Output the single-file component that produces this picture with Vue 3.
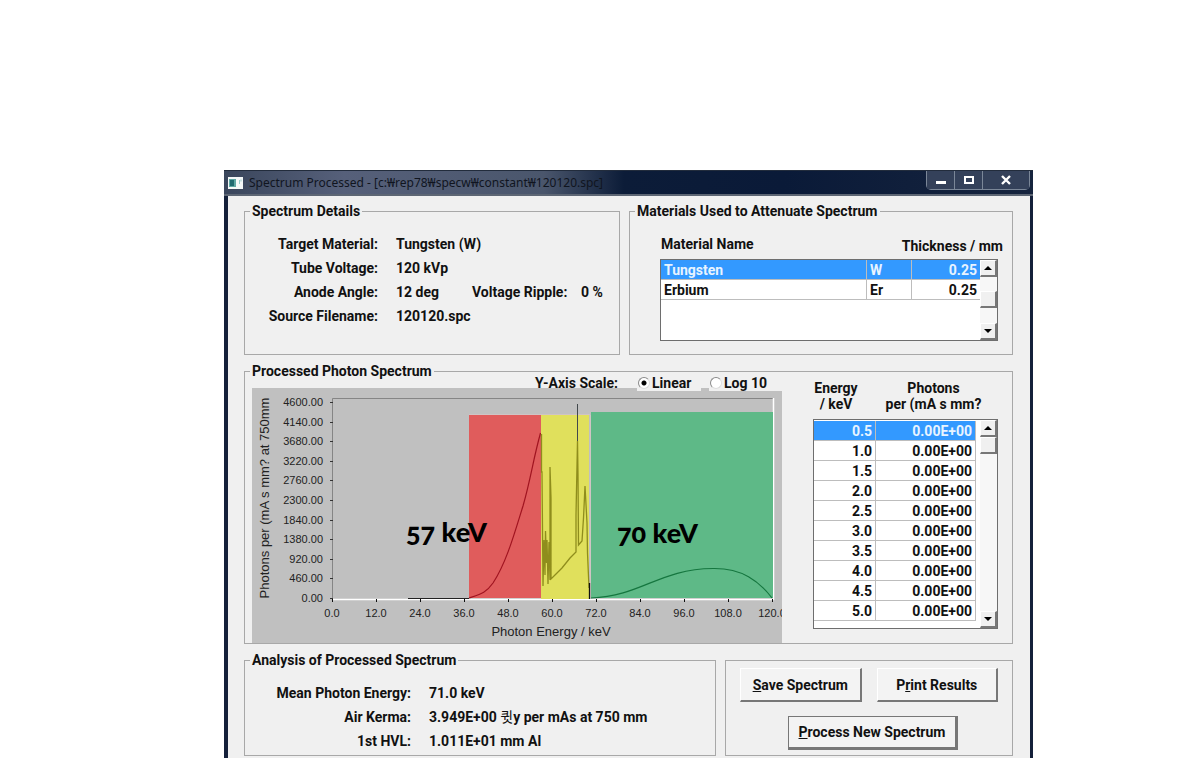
<script setup>
import { ref } from 'vue'

const details = [
  ['Target Material:', 'Tungsten (W)'],
  ['Tube Voltage:', '120 kVp'],
  ['Anode Angle:', '12 deg'],
  ['Source Filename:', '120120.spc'],
]
const materials = [
  ['Tungsten', 'W', '0.25'],
  ['Erbium', 'Er', '0.25'],
]
const energies = ['0.5', '1.0', '1.5', '2.0', '2.5', '3.0', '3.5', '4.0', '4.5', '5.0']
const yTicks = Array.from({ length: 11 }, (_, i) => ({
  label: (4600 - i * 460).toFixed(2),
  y: Math.round(14 + i * 19.6),
}))
const xTicks = Array.from({ length: 11 }, (_, i) => ({
  label: (i * 12).toFixed(1),
  x: 80 + i * 44,
}))
const scale = ref('linear')
</script>

<template>
  <main class="page">
    <section class="window">
      <header class="titlebar">
        <svg class="app-icon" width="15" height="12" viewBox="0 0 15 12" aria-hidden="true">
          <rect width="15" height="12" fill="#f4f8f8" />
          <rect x="1" y="2" width="7" height="8" fill="#5fa8a4" />
          <rect x="2" y="3" width="4" height="6" fill="#1f6a70" />
          <path d="M11.500 3v4M13 2.500v2" stroke="#9cc" fill="none" />
        </svg>
        <h1 class="title">Spectrum Processed - [c:₩rep78₩specw₩constant₩120120.spc]</h1>
        <div class="controls">
          <button type="button" class="ctl" aria-label="Minimize">
            <svg width="12" height="12" viewBox="0 0 12 12"><rect x="1" y="7" width="10" height="3" fill="#fff" /></svg>
          </button>
          <button type="button" class="ctl" aria-label="Maximize">
            <svg width="12" height="12" viewBox="0 0 12 12"><rect x="2" y="3" width="8" height="6" fill="none" stroke="#fff" stroke-width="2" /></svg>
          </button>
          <button type="button" class="ctl close" aria-label="Close">
            <svg width="12" height="12" viewBox="0 0 12 12"><path d="M2 2L10 10M10 2L2 10" stroke="#fff" stroke-width="2.400" /></svg>
          </button>
        </div>
      </header>

      <div class="body">
        <div class="row top">
          <fieldset class="group">
            <legend>Spectrum Details</legend>
            <dl class="facts">
              <template v-for="(d, i) in details" :key="d[0]">
                <dt>{{ d[0] }}</dt>
                <dd>
                  <span class="value">{{ d[1] }}</span>
                  <template v-if="i === 2"><span class="ripple">Voltage Ripple:</span><span>0 %</span></template>
                </dd>
              </template>
            </dl>
          </fieldset>

          <fieldset class="group">
            <legend>Materials Used to Attenuate Spectrum</legend>
            <div class="mat-head"><span>Material Name</span><span class="thick">Thickness / mm</span></div>
            <div class="list mat-list">
              <div class="cells">
                <table aria-label="Materials">
                  <tbody>
                    <tr v-for="(m, i) in materials" :key="m[0]" :class="{ on: i === 0 }">
                      <td>{{ m[0] }}</td><td class="sym">{{ m[1] }}</td><td class="num thk">{{ m[2] }}</td>
                    </tr>
                  </tbody>
                </table>
              </div>
              <div class="scroll">
                <button type="button" aria-label="Scroll up"><svg width="8" height="4" viewBox="0 0 8 4"><path d="M4 0L8 4H0z" /></svg></button>
                <i class="thumb mid"></i>
                <button type="button" class="down" aria-label="Scroll down"><svg width="8" height="4" viewBox="0 0 8 4"><path d="M0 0H8L4 4z" /></svg></button>
              </div>
            </div>
          </fieldset>
        </div>

        <fieldset class="group spectrum">
          <legend>Processed Photon Spectrum</legend>
          <div class="spec-row">
            <div class="chart-col">
              <div class="scale" role="radiogroup" aria-label="Y-Axis Scale">
                <span class="scale-name">Y-Axis Scale:</span>
                <label class="opt"><input v-model="scale" type="radio" name="scale" value="linear" />Linear</label>
                <label class="opt last"><input v-model="scale" type="radio" name="scale" value="log" />Log 10</label>
              </div>
              <svg class="chart" viewBox="0 0 530 255" role="img" aria-label="Photon spectrum">
                <rect width="530" height="255" fill="#c0c0c0" />
                <path d="M80.500 211V10.500H521" fill="none" stroke="#858585" />
                <path d="M80 211.500H521.500V10" fill="none" stroke="#fff" stroke-width="1.500" />
                <g class="tick">
                  <g v-for="t in yTicks" :key="t.label">
                    <path :d="`M78 ${t.y + 0.5}h3`" stroke="#333" />
                    <text :x="71" :y="t.y + 4" text-anchor="end">{{ t.label }}</text>
                  </g>
                  <g v-for="t in xTicks" :key="t.label">
                    <path :d="`M${t.x + 0.5} 211v3`" stroke="#111" />
                    <text :x="t.x" y="229" text-anchor="middle">{{ t.label }}</text>
                  </g>
                </g>
                <text class="axis" x="299" y="248" text-anchor="middle">Photon Energy / keV</text>
                <text class="axis" transform="translate(17 110) rotate(-90)" text-anchor="middle">Photons per (mA s mm? at 750mm</text>
                <path d="M217 26.500H338M338.500 27V210" stroke="#d0c4c4" fill="none" />
                <rect x="217" y="27" width="72" height="183" fill="#e05c5c" />
                <rect x="289" y="27" width="48" height="184" fill="#e0e05c" />
                <rect x="339" y="24" width="182" height="186" fill="#5eb987" />
                <path d="M156 210.500H217" stroke="#222" />
                <path d="M217 210C229 206 234 205 241 195C255 174 264 140 271 118C279 90 281 72 288.500 45" fill="none" stroke="#a01420" stroke-width="1.200" />
                <path d="M289.500 46V84L290 84L291 198L292 152L293 187L293.500 143L294.500 175L295 152L296 196L297 154L298 192V79L299 110V191L304 186L310 180L318 170L324 164V127L325.500 53L326 87L326.500 157L330 153L331.500 130L333 98L335 135L335.500 165L337 200" fill="none" stroke="#8f8d1c" stroke-width="1.300" />
                <path d="M325.500 16V53" stroke="#42484c" />
                <path d="M337.500 195V211" stroke="#111" stroke-width="1.300" />
                <path d="M339 210C390 208 407 181 461 180.500C490 180 507 193 520 210" fill="none" stroke="#15763f" stroke-width="1.200" />
                <text class="mark" x="154" y="154">57 keV</text>
                <text class="mark" x="365" y="155">70 keV</text>
              </svg>
            </div>

            <div class="energy-col">
              <div class="en-head"><span>Energy<br />/ keV</span><span>Photons<br />per (mA s mm?</span></div>
              <div class="list en-list">
                <div class="cells">
                  <table aria-label="Photons by energy">
                    <tbody>
                      <tr v-for="(e, i) in energies" :key="e" :class="{ on: i === 0 }">
                        <td class="num en">{{ e }}</td><td class="num">0.00E+00</td>
                      </tr>
                    </tbody>
                  </table>
                </div>
                <div class="scroll">
                  <button type="button" aria-label="Scroll up"><svg width="8" height="4" viewBox="0 0 8 4"><path d="M4 0L8 4H0z" /></svg></button>
                  <i class="thumb"></i>
                  <button type="button" class="down" aria-label="Scroll down"><svg width="8" height="4" viewBox="0 0 8 4"><path d="M0 0H8L4 4z" /></svg></button>
                </div>
              </div>
            </div>
          </div>
        </fieldset>

        <div class="row bottom">
          <fieldset class="group analysis">
            <legend>Analysis of Processed Spectrum</legend>
            <dl class="facts wide">
              <dt>Mean Photon Energy:</dt>
              <dd>71.0 keV</dd>
              <dt>Air Kerma:</dt>
              <dd>3.949E+00 <span class="hangul">큇</span>y per mAs at 750 mm</dd>
              <dt>1st HVL:</dt>
              <dd>1.011E+01 mm Al</dd>
            </dl>
          </fieldset>
          <div class="actions">
            <div class="pair">
              <button type="button" class="btn"><u>S</u>ave Spectrum</button>
              <button type="button" class="btn">P<u>r</u>int Results</button>
            </div>
            <button type="button" class="btn main"><u>P</u>rocess New Spectrum</button>
          </div>
        </div>
      </div>
    </section>
  </main>
</template>

<style>
body {
  background: #fff;
}
</style>

<style scoped>
.page {
  box-sizing: border-box;
  min-height: 100vh;
  padding: 170px 158px 0 224px;
  display: flex;
  font: bold 14px/16px Roboto, "Liberation Sans", "Noto Sans CJK KR", sans-serif;
  color: #111;
}
.window {
  flex: 1;
  min-width: 0;
  display: flex;
  flex-direction: column;
  background: #14203a;
  padding: 0 3px 0 4px;
}
.titlebar {
  height: 26px;
  display: flex;
  align-items: center;
  gap: 6px;
  margin: 0 -3px 0 -4px;
  padding-left: 4px;
  background: linear-gradient(90deg, #3a465c 0, #56607a 120px, #4a566c 320px, #0c1c38 400px, #0a1a38 560px, #16243e 100%);
  border-top: 1px solid #222c3c;
  border-bottom: 2px solid #5d6674;
  box-sizing: border-box;
}
.title {
  flex: 1;
  margin: 0;
  font: 12px/16px "Noto Sans", "Noto Sans CJK KR", sans-serif;
  color: #10151f;
  white-space: nowrap;
}
.controls {
  display: flex;
  align-self: flex-start;
  margin-right: 3px;
  border: 1px solid #7b8798;
  border-top: 0;
  border-radius: 0 0 5px 5px;
}
.ctl {
  width: 28px;
  height: 18px;
  padding: 0;
  border: 0;
  border-right: 1px solid #7b8798;
  background: #34415a;
  display: grid;
  place-items: center;
}
.ctl.close {
  width: 46px;
  border-right: 0;
}
.body {
  flex: 1;
  background: #f0f0f0;
  padding: 7px 17px 2px 16px;
  display: flex;
  flex-direction: column;
  gap: 8px;
}
.row {
  display: grid;
  gap: 9px;
}
.group {
  box-sizing: border-box;
  min-width: 0;
  margin: 0;
  padding: 0;
  border: 1px solid #a8a8a8;
}
.group legend {
  margin-left: 5px;
  padding: 0 2px;
}
.top {
  grid-template-columns: 376fr 384fr;
}
.top .group {
  height: 152px;
}
.facts {
  display: grid;
  grid-template-columns: 133px 1fr;
  column-gap: 18px;
  line-height: 24px;
  margin: 13px 0 0;
}
.facts.wide {
  grid-template-columns: 166px 1fr;
}
.facts dt {
  text-align: right;
}
.facts dd {
  margin: 0;
  display: flex;
  white-space: pre;
}
.hangul {
  font-weight: normal;
}
.value {
  min-width: 76px;
}
.ripple {
  min-width: 109px;
}
.mat-head {
  display: flex;
  justify-content: space-between;
  margin: 17px 9px 0 31px;
  padding-bottom: 5px;
}
.thick {
  padding-top: 2px;
}
.list {
  display: flex;
  box-sizing: border-box;
  background: #fff;
  border: 1px solid #6e6e6e;
}
.mat-list {
  height: 82px;
  margin: 0 14px 0 30px;
}
.cells {
  flex: 1;
}
table {
  width: 100%;
  border-collapse: separate;
  border-spacing: 0;
}
td {
  box-sizing: border-box;
  height: 20px;
  padding: 2px 3px 0;
  line-height: 17px;
  border-right: 1px solid #bdbdbd;
  border-bottom: 1px solid #bdbdbd;
}
.sym {
  width: 45px;
}
.thk {
  width: 68px;
}
.mat-list td:last-child {
  border-right: 0;
}
.num {
  text-align: right;
}
.en {
  width: 62px;
}
.on td {
  background: #3399ff;
  color: #e8f4ff;
}
.scroll {
  width: 17px;
  display: flex;
  flex-direction: column;
  background: #f7f7f7;
}
.scroll button,
.thumb {
  box-sizing: border-box;
  height: 17px;
  flex: none;
  padding: 0;
  border: 1px solid #fff;
  border-right: 2px solid #777;
  border-bottom: 2px solid #777;
  background: #f0f0f0;
  display: grid;
  place-items: center;
}
.mid {
  margin-top: 14px;
}
.scroll .down {
  margin-top: auto;
}
.spectrum {
  height: 281px;
}
.spec-row {
  display: flex;
}
.chart-col {
  flex: 1;
  min-width: 0;
  padding-left: 7px;
}
.scale {
  position: relative;
  display: flex;
  justify-content: flex-end;
  margin: -4px 0 -3px;
}
.scale-name {
  height: 15px;
  margin-right: 19px;
}
.opt {
  display: flex;
  align-items: center;
  background: #f0f0f0;
  width: 64px;
}
.opt.last {
  margin-left: 8px;
  width: 73px;
}
.opt input {
  appearance: none;
  box-sizing: border-box;
  width: 12px;
  height: 12px;
  margin: 0 2px 0 1px;
  border: 1px solid #8a8a8a;
  border-right-color: #ddd;
  border-bottom-color: #ddd;
  border-radius: 50%;
  background: #fff;
}
.opt input:checked {
  background: radial-gradient(circle, #000 2px, #fff 3px);
}
.chart {
  display: block;
  width: 100%;
}
.tick {
  font: 11px "Liberation Sans", sans-serif;
  fill: #222;
}
.axis {
  font: 13px "Liberation Sans", sans-serif;
  fill: #222;
}
.mark {
  font: 900 27px Lato, sans-serif;
  font-variant-numeric: oldstyle-nums;
  fill: #000;
}
.energy-col {
  width: 185px;
  margin: 1px 14px 0 31px;
}
.en-head {
  display: grid;
  grid-template-columns: 46px 1fr;
  text-align: center;
  white-space: nowrap;
  column-gap: 10px;
  margin-bottom: 7px;
}
.en-list {
  height: 210px;
}
.en-list .cells {
  padding: 1px 4px 0 0;
}
.bottom {
  grid-template-columns: 472fr 288fr;
}
.analysis {
  height: 104px;
}
.actions {
  box-sizing: border-box;
  margin-top: 8px;
  border: 1px solid #a8a8a8;
  padding: 7px 14px 0;
  display: flex;
  flex-direction: column;
  align-items: center;
  gap: 14px;
}
.pair {
  align-self: stretch;
  display: grid;
  grid-template-columns: 1fr 1fr;
  gap: 15px;
}
.btn {
  box-sizing: border-box;
  height: 34px;
  padding: 0 6px;
  font: inherit;
  color: inherit;
  white-space: nowrap;
  background: #f3f3f3;
  border: 1px solid #fff;
  border-right: 2px solid #777;
  border-bottom: 2px solid #777;
}
.btn.main {
  width: 170px;
  margin-left: 8px;
  border: 1px solid #777;
  border-right-width: 3px;
  border-bottom-width: 3px;
}
</style>
